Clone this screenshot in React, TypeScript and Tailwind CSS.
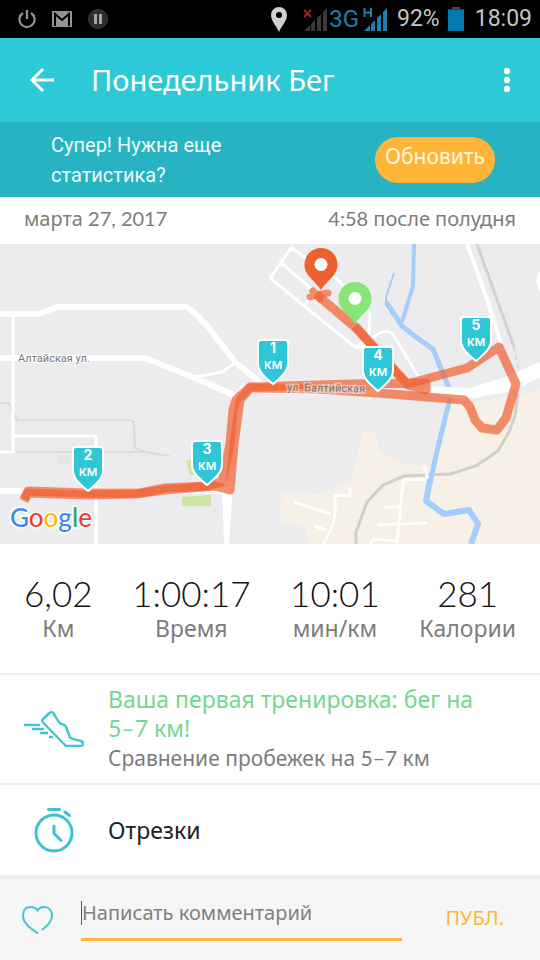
import type { ReactNode } from "react";

const markers = [
  { km: 1, x: 273, y: 95 },
  { km: 2, x: 88, y: 202 },
  { km: 3, x: 207, y: 196 },
  { km: 4, x: 378, y: 102 },
  { km: 5, x: 476, y: 72 },
];

const stats = [
  { value: "6,02", label: "Км" },
  { value: "1:00:17", label: "Время" },
  { value: "10:01", label: "мин/км" },
  { value: "281", label: "Калории" },
];

function Num({ children }: { children: ReactNode }) {
  return <span className="inline-block leading-none font-[Lato,sans-serif]">{children}</span>;
}

function Signal({ active, mark }: { active?: boolean; mark: string }) {
  return (
    <svg width="26" height="26" viewBox="0 0 26 26" aria-hidden="true">
      <g fill={active ? "#1e7fb0" : "#3b3b3b"}>
        <path d="M1 25l6-6v6z" />
        <path d="M8 18l4-4v11H8z" />
        <path d="M14 12l4-4v17h-4z" />
        <path d="M20 6l4-4v23h-4z" />
      </g>
      {mark === "x" ? (
        <path d="M1 4l7 7M8 4l-7 7" stroke="#a31c22" strokeWidth="2" />
      ) : (
        <path d="M1.500 2v9M8 2v9M1 6.500h7" stroke="#1e7fb0" strokeWidth="2" fill="none" />
      )}
    </svg>
  );
}

function StatusBar() {
  return (
    <div className="flex h-[38px] items-center bg-black px-2 text-[23px] text-[#c4c4c4] font-[Roboto,sans-serif]">
      <div className="flex flex-1 items-center gap-4 pl-[10px]">
        <svg width="18" height="20" viewBox="0 0 18 20" fill="none" stroke="#949494" strokeWidth="2.200" aria-hidden="true">
          <path d="M9 1v9M5 4a7.600 7.600 0 1 0 8 0" />
        </svg>
        <svg width="20" height="16" viewBox="0 0 20 16" aria-hidden="true">
          <path fill="#949494" d="M0 0h20v16H0z" />
          <path d="M3 15V3l7 6 7-6v12" fill="none" stroke="#000" strokeWidth="2" />
        </svg>
        <svg width="20" height="20" viewBox="0 0 20 20" aria-hidden="true">
          <circle cx="10" cy="10" r="9.500" fill="#2d2d2d" stroke="#3c3c3c" />
          <path d="M7.500 5v10M12.500 5v10" stroke="#a5a5a5" strokeWidth="3" />
        </svg>
      </div>
      <svg width="16" height="25" viewBox="0 0 16 25" className="mr-4" aria-hidden="true">
        <path
          fill="#cfcfcf"
          fillRule="evenodd"
          d="M8 0a8 8 0 0 1 8 8c0 6-5 10-8 17C5 18 0 14 0 8a8 8 0 0 1 8-8zm0 5a3 3 0 1 0 0 6 3 3 0 0 0 0-6z"
        />
      </svg>
      <Signal mark="x" />
      <span className="text-[24px] text-[#1e7fb0]">3G</span>
      <span className="ml-1">
        <Signal active mark="h" />
      </span>
      <span className="ml-2">92%</span>
      <svg width="16" height="24" viewBox="0 0 16 24" className="mr-[11px] ml-2" aria-hidden="true">
        <path fill="#444" d="M4 0h8v2h4v3H0V2h4z" />
        <path fill="#0678b0" d="M0 3h16v21H0z" />
      </svg>
      <span>18:09</span>
    </div>
  );
}

function KmMarker({ km, x, y }: { km: number; x: number; y: number }) {
  return (
    <g transform={`translate(${x} ${y})`} textAnchor="middle" fill="#fff" fontFamily="Inter, sans-serif">
      <path
        d="M-12 1h24a3 3 0 0 1 3 3V24C15 33 8 38 0 45C-8 38-15 33-15 24V4a3 3 0 0 1 3-3z"
        fill="#2ec7d5"
        stroke="#fff"
        strokeWidth="2"
      />
      <text y="14" fontSize="14" fontWeight="700">{km}</text>
      <text y="30" fontSize="14" fontWeight="500">км</text>
    </g>
  );
}

function Pin({ x, y, color }: { x: number; y: number; color: string }) {
  return (
    <g transform={`translate(${x} ${y})`}>
      <path
        fill={color}
        d="M0-42a16.500 16.500 0 0 1 16.500 16.500C16.500-14 6-10 0 0C-6-10-16.500-14-16.500-25.500A16.500 16.500 0 0 1 0-42z"
      />
      <circle cy="-25.500" r="6.500" fill="#fff" />
    </g>
  );
}

function RouteMap() {
  return (
    <svg viewBox="0 0 540 300" className="block w-full" role="img" aria-label="Карта пробежки">
      <path fill="#ecebed" d="M0 0h540v300H0z" />
      <path
        fill="#f6f0e6"
        d="M540 146l-30 6-42 8-20-1-17 64-26-3-25-12-6-21-10-1-4 15-10 35-28 14-37-1-6 14 1 14 24 6 6 17h230z"
      />
      <path fill="#cde6a2" d="M182 253l29-2v11h-29zM186 217l8-1v15h-4z" />
      <path fill="#e7e8e4" d="M57 211h14v9H57z" />

      {/* minor roads and rail */}
      <g fill="none" stroke="#dadbdb" strokeWidth="2">
        <path d="M0 159h9l8 17h112q5 0 5 5l1 23 10 4 25 4M16 208h129" />
        <path stroke="#d0d2d1" strokeWidth="3" d="M477 0l18 50 19 53" />
        <path stroke="#d0d6e8" strokeDasharray="4 5" d="M514 103l5 24" />
        <path
          stroke="#cfd0cc"
          strokeWidth="3"
          d="M518 150l-3 22-6 16-11 19-22 15-26 8-46 2-21 9-16 17-11 30v12"
        />
      </g>

      <g fill="none" stroke="#fff" strokeLinejoin="round">
        <path strokeWidth="6" d="M0 70h38l20-7h127q5 0 23 20l28 36 29 23" />
        <path strokeWidth="6" d="M0 114h145l50 20 45 20" />
        <path strokeWidth="3" d="M195 133l27-5 14-10M13 73v135H0M14 192h82v108" />
        <path strokeWidth="6" d="M0 247h230" />
        <path strokeWidth="3" d="M271 33l20-29 44 29 35 36-2 30q-5 6-13 4l-84-68zM280 18l34 29-10 16M355 103l25-14q10-4 14 3l27 45" />
        <path strokeWidth="4" d="M467 0l20 55 14 45" />
        <path strokeWidth="8" d="M240 145l140 3" />
        <path strokeWidth="3" d="M542 28q-8 8 0 20" />
        <path
          strokeWidth="3"
          d="M294 258l37 12M350 244v8l-15-1v20q-2 14-12 29M314 282l12 4M424 221l4 14-24 1-2 11-5 53M384 263h18M377 281l50-2M370 300l3-5 23 2"
        />
      </g>
      <path fill="#fff" d="M222 238h11l-4 62h-5z" />

      {/* river */}
      <g fill="none" stroke="#a3cdfb" strokeLinejoin="round">
        <path strokeWidth="4" d="M414 0l-1 42-11 36" />
        <path strokeWidth="2" d="M394 29l-8 24v6" />
        <path strokeWidth="5" d="M386 58l16 24 14 11 17 12 18 44" />
        <path strokeWidth="5" d="M450 154l-15 62-9 42" />
        <path strokeWidth="6" d="M430 235l-4 22 18 13 25-4 9 14-7 20" />
      </g>
      <path fill="#fff" d="M425 142l45 2 38-12 32-14v16l-32 14-34 6-18 1-31-7z" />

      {/* outbound and return legs, darker where they overlap */}
      <g fill="none" stroke="#f06234" strokeOpacity="0.720" strokeWidth="9" strokeLinejoin="round">
        <path d="M355 82L407 140L467 124L499 103L516 140L506 174L497 186L482 184L475 176L470 163L464 156L378 149L317 145L250 144L240 156L234 200L230 246L215 242L165 246L135 250L88 251L28 249L24 257" />
        <path d="M24 255L28 247L88 249L140 249L165 244L207 242L222 238L230 200L233 166L236 156L250 143L350 140L426 139L426 146L408 141L355 83L316 50" />
        <path d="M310 53l6-2 12-2M313 47l7 8" strokeLinecap="round" strokeWidth="7" />
      </g>

      <g fontFamily="Roboto, sans-serif" fill="#757575" stroke="#fff" paintOrder="stroke">
        <text x="18" y="118" fontSize="11" strokeWidth="2">Алтайская ул.</text>
        <text x="287" y="147" fontSize="11" strokeWidth="3" strokeOpacity="0.450" transform="rotate(1 287 147)">
          ул. Балтийская
        </text>
      </g>

      <Pin x={321} y={46} color="#ee602f" />
      <Pin x={355} y={80} color="#88e578" />
      {markers.map((m) => (
        <KmMarker key={m.km} {...m} />
      ))}

      <text x="10" y="283" fontSize="26" fontFamily="Lato, sans-serif" fontWeight="500" stroke="#fff" strokeWidth="3" paintOrder="stroke">
        <tspan fill="#4285f4">G</tspan>
        <tspan fill="#ea4335">o</tspan>
        <tspan fill="#fbbc05">o</tspan>
        <tspan fill="#4285f4">g</tspan>
        <tspan fill="#34a853">l</tspan>
        <tspan fill="#ea4335">e</tspan>
      </text>
    </svg>
  );
}

function ShoeIcon() {
  return (
    <svg width="60" height="36" viewBox="0 0 60 36" fill="none" stroke="#43c4d3" strokeWidth="2.400" strokeLinejoin="round" aria-hidden="true">
      <path d="M0 14h16M8 18h12M16 22h8M25 26h4" />
      <path d="M18.500 8.500L26 1.500q2-1 3.500.5c2 4 4 8 7 10.500l5 2 4.500 12c3 2 7 2.500 11 3.500q3 1 2 4-1 1-3 1H42L19 11.500q-1.500-1.500-.5-3z" />
    </svg>
  );
}

function StopwatchIcon() {
  return (
    <svg width="40" height="46" viewBox="0 0 40 46" fill="none" stroke="#3cc2d0" strokeWidth="3" strokeLinecap="round" aria-hidden="true">
      <circle cx="20" cy="26" r="18" />
      <path d="M14.500 2.500h11M31 5l4.500 3.500M20 19v7.500l7 7" />
    </svg>
  );
}

export default function App() {
  return (
    <div className="flex min-h-screen flex-col bg-white text-[#7c7c7c] font-['Noto_Sans',sans-serif]">
      <StatusBar />

      <header className="flex h-[84px] items-center bg-[#2ec9d6] px-7 text-white">
        <button type="button" aria-label="Назад">
          <svg width="28" height="26" viewBox="0 0 28 26" fill="none" stroke="#fff" strokeWidth="3" aria-hidden="true">
            <path d="M26 13H4M15 2L4 13l11 11" />
          </svg>
        </button>
        <h1 className="ml-[35px] flex-1 text-[29px] leading-9">Понедельник Бег</h1>
        <button type="button" aria-label="Меню">
          <svg width="10" height="26" viewBox="0 0 10 26" fill="#fff" aria-hidden="true">
            <circle cx="5" cy="4" r="3.200" />
            <circle cx="5" cy="13" r="3.200" />
            <circle cx="5" cy="22" r="3.200" />
          </svg>
        </button>
      </header>

      <section className="flex h-[75px] items-center justify-between bg-[#28b3c2] pr-[45px] pl-[51px]">
        <p className="w-[200px] text-[20px] leading-[30px] text-[#effcfd] font-[Roboto,sans-serif]">
          Супер! Нужна еще статистика?
        </p>
        <button type="button" className="h-[46px] rounded-full bg-[#ffb638] px-[10px] pb-[6px] text-[21px] text-[#fff6e0]">
          Обновить
        </button>
      </section>

      <div className="flex h-[47px] items-center justify-between px-6 pb-1 text-[20px]">
        <span>
          марта <Num>27, 2017</Num>
        </span>
        <span>
          <Num>4:58</Num> после полудня
        </span>
      </div>

      <RouteMap />

      <dl className="flex h-[131px] justify-between border-b-2 border-[#eeeeee] px-6 pt-7">
        {stats.map((s) => (
          <div key={s.label} className="flex flex-col-reverse justify-end text-center">
            <dt className="text-[23px] leading-7">{s.label}</dt>
            <dd className="text-[35px] leading-[42px] font-light text-[#111111] font-[Lato,sans-serif]">{s.value}</dd>
          </div>
        ))}
      </dl>

      <section className="flex h-[110px] items-center border-b-2 border-[#eeeeee] px-6">
        <ShoeIcon />
        <div className="ml-6 flex-1">
          <h2 className="text-[23px] leading-[29px] text-[#74d791]">
            Ваша первая тренировка: бег на <Num>5–7</Num> км!
          </h2>
          <p className="text-[21px] leading-[30px]">
            Сравнение пробежек на <Num>5–7</Num> км
          </p>
        </div>
      </section>

      <section className="flex h-[90px] items-center px-[34px]">
        <StopwatchIcon />
        <h2 className="ml-[34px] text-[23px] text-[#212121]">Отрезки</h2>
      </section>

      <form className="flex flex-1 items-center border-t-4 border-[#eeeeee] bg-[#f6f6f6] px-[22px]">
        <button type="button" aria-label="Нравится">
          <svg width="32" height="28" viewBox="0 0 32 28" fill="none" stroke="#45c5d2" strokeWidth="2" strokeLinecap="round" aria-hidden="true">
            <path d="M15.500 27C8 22 1 17 1 9.500C1 4 4 1 8.500 1c3 0 5.500 1 7 3.500C17 2 20 1 22.500 1C27 1 30 4.500 30 9.500c0 6-4 10-9.500 14" />
          </svg>
        </button>
        <div className="ml-[27px] flex flex-1 items-center border-b-3 border-[#ffb638] pb-[10px]">
          <span className="h-6 w-px bg-[#555555]" />
          <input
            type="text"
            aria-label="Комментарий"
            placeholder="Написать комментарий"
            className="min-w-0 flex-1 text-[20px] leading-[30px] outline-none placeholder:text-[#808080]"
          />
        </div>
        <button type="submit" className="mr-[14px] ml-[43px] pb-1 text-[20px] text-[#ffb638]">
          ПУБЛ.
        </button>
      </form>
    </div>
  );
}
